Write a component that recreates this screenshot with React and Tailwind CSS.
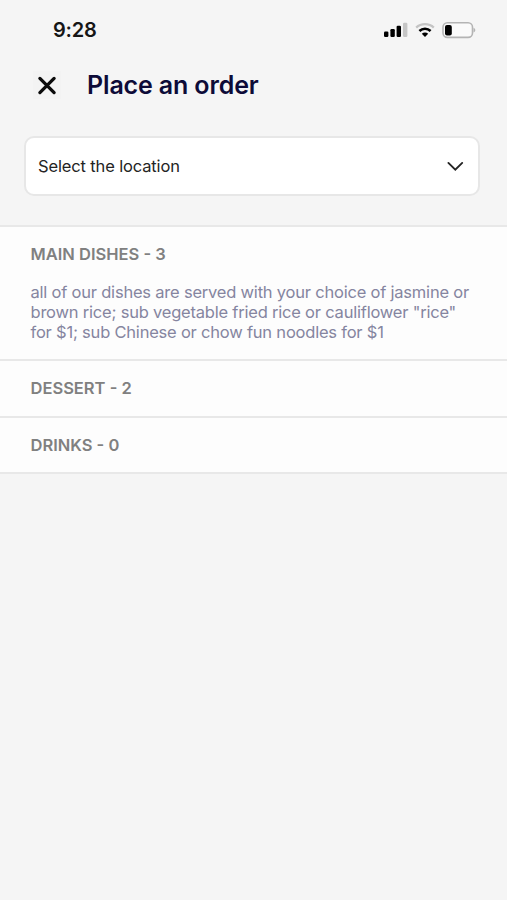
import React from 'react';

const categories = [
  {
    name: 'MAIN DISHES',
    count: 3,
    lines: [
      'all of our dishes are served with your choice of jasmine or',
      'brown rice; sub vegetable fried rice or cauliflower "rice"',
      'for $1; sub Chinese or chow fun noodles for $1',
    ],
  },
  { name: 'DESSERT', count: 2 },
  { name: 'DRINKS', count: 0 },
];

const StatusBar = () => (
  <div className="flex h-[60px] items-center justify-between pl-[53px] pr-[31px]">
    <span className="text-[20px] font-semibold leading-6 tracking-[-0.2px] text-[#161616]">9:28</span>
    <div className="flex items-center">
      {/* Signal */}
      <svg width="24" height="16" viewBox="0 0 24 16" fill="#000">
        <rect x="0" y="9.5" width="4.4" height="5.5" rx="1.2" />
        <rect x="6.4" y="7" width="4.4" height="8" rx="1.2" />
        <rect x="12.6" y="3.8" width="4.4" height="11.2" rx="1.2" />
        <rect x="19" y="0.8" width="4.4" height="14.2" rx="1.2" fill="#c6c6c6" />
      </svg>
      {/* Wifi */}
      <svg className="ml-[7px]" width="20" height="16" viewBox="0 0 20 16" fill="none">
        <path d="M1.2 5.6C6 1 14 1 18.8 5.6" stroke="#c4c4c4" strokeWidth="2.3" />
        <path d="M4.4 9C7.6 5.9 12.4 5.9 15.6 9" stroke="#000" strokeWidth="2.5" />
        <path d="M10 15L6.8 11.8C8.6 10.1 11.4 10.1 13.2 11.8Z" fill="#000" />
      </svg>
      {/* Battery */}
      <svg className="ml-[7px]" width="34" height="18" viewBox="0 0 34 18" fill="none">
        <rect x="1" y="1.8" width="29.5" height="14.6" rx="4.4" fill="#fafafa" stroke="#b4b4b4" strokeWidth="1.6" />
        <rect x="3" y="4" width="6.8" height="10.4" rx="2" fill="#000" />
        <path d="M31.5 6.7C33.9 7.6 33.9 10.6 31.5 11.5Z" fill="#b4b4b4" />
      </svg>
    </div>
  </div>
);

const Header = () => (
  <header className="flex h-[50px] items-center pl-[33px]">
    <button className="flex h-7 w-7 items-center justify-center bg-[#f3f3f3]" aria-label="Close">
      <svg width="20" height="20" viewBox="0 0 20 20" fill="none" stroke="#0b0b0b" strokeWidth="3.3" strokeLinecap="round">
        <path d="M2.9 3.4L17.1 17.6M17.1 3.4L2.9 17.6" />
      </svg>
    </button>
    <h1 className="ml-[26px] text-[25px] font-semibold leading-8 tracking-[-0.14px] text-[#0d0b38]">
      Place an order
    </h1>
  </header>
);

const LocationSelect = () => (
  <button className="ml-[24px] mr-[27px] mt-[26px] flex h-[60px] items-center justify-between rounded-[10px] border-2 border-[#e7e7e7] bg-white pl-[12px] pr-[14px]">
    <span className="text-[16.5px] leading-6 tracking-[-0.14px] text-[#242424]">Select the location</span>
    <svg width="18" height="12" viewBox="0 0 18 12" fill="none" stroke="#242424" strokeWidth="1.9">
      <path d="M2.4 2.9L9.3 9.6L16.2 2.9" strokeLinecap="round" />
    </svg>
  </button>
);

const Category = ({ name, count, lines }) => (
  <section className={`border-b-2 border-[#e8e8e8] bg-[#fdfdfd] pl-[30.5px] ${lines ? 'h-[134px] pt-[15px]' : 'h-[56.5px] pt-[15px]'}`}>
    <h2 className="text-[16.5px] font-semibold leading-6 text-[#808080]">{name} - {count}</h2>
    {lines && (
      <p className="mt-4 text-[16.5px] leading-5 tracking-[-0.21px] text-[#8585a0]">
        {lines.map((line) => (
          <span key={line} className="block whitespace-nowrap">{line}</span>
        ))}
      </p>
    )}
  </section>
);

const App = () => (
  <div className="flex h-[900px] w-full flex-col overflow-hidden bg-[#f5f5f5] font-['Inter',sans-serif]">
    <StatusBar />
    <Header />
    <LocationSelect />
    <main className="mt-[29px] border-t-2 border-[#e8e8e8]">
      {categories.map((category) => (
        <Category key={category.name} {...category} />
      ))}
    </main>
  </div>
);

export default App;
